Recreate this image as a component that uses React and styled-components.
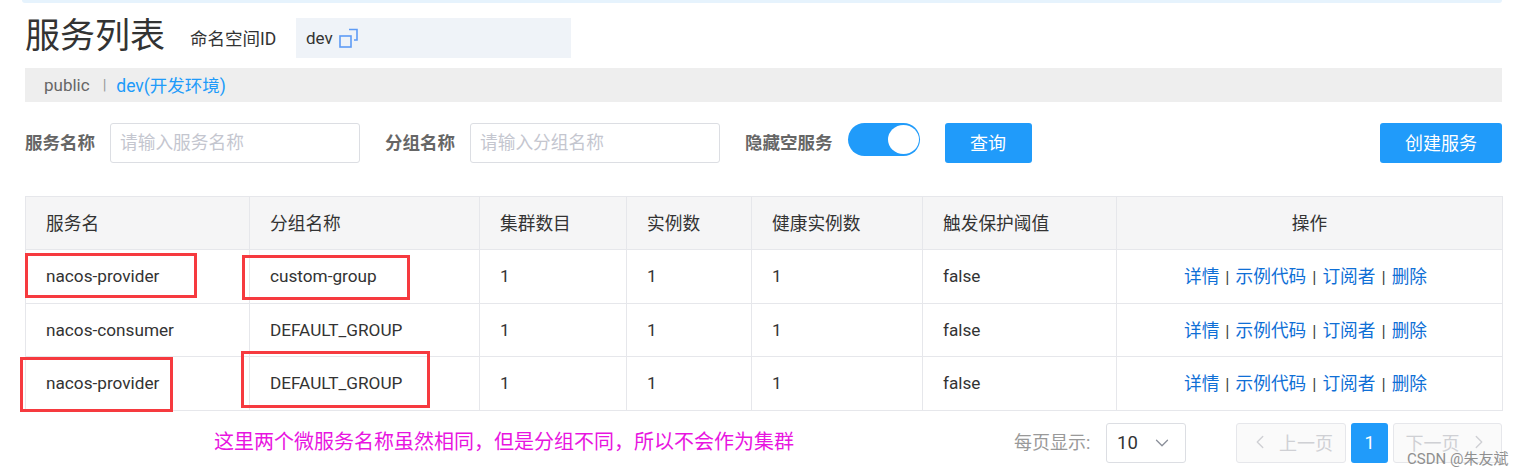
import React from "react";
import styled, { createGlobalStyle } from "styled-components";
import { ChevronDown, ChevronLeft, ChevronRight } from "lucide-react";

const services = [
  { name: "nacos-provider", group: "custom-group" },
  { name: "nacos-consumer", group: "DEFAULT_GROUP" },
  { name: "nacos-provider", group: "DEFAULT_GROUP" },
];

const columns = [
  { title: "服务名", width: 224 },
  { title: "分组名称", width: 230 },
  { title: "集群数目", width: 147 },
  { title: "实例数", width: 125 },
  { title: "健康实例数", width: 171 },
  { title: "触发保护阈值", width: 194 },
  { title: "操作", width: 386, center: true },
];

const marks = [
  { left: 0, top: 57, width: 172, height: 45 },
  { left: 217, top: 59, width: 168, height: 45 },
  { left: -5, top: 161, width: 153, height: 55 },
  { left: 216, top: 155, width: 189, height: 57 },
];

const GlobalStyle = createGlobalStyle`
  html, body {
    margin: 0;
    background: #fff;
    overflow: hidden;
  }
  body {
    font-family: Roboto, "Noto Sans CJK SC", sans-serif;
  }
`;

const App = () => {
  return (
    <Page>
      <GlobalStyle />
      <TopStrip />
      <TitleRow>
        <Title>服务列表</Title>
        <NamespaceLabel>命名空间ID</NamespaceLabel>
        <NamespaceBox>
          dev
          <CopyIcon viewBox="0 0 20 20">
            <rect x="1" y="8" width="11" height="11" fill="none" stroke="#5e9bf5" strokeWidth="1.6" />
            <path d="M10 1.500h8v10.500h-3" fill="none" stroke="#5e9bf5" strokeWidth="1.6" />
          </CopyIcon>
        </NamespaceBox>
      </TitleRow>

      <NamespaceBar>
        <PublicNamespace>public</PublicNamespace>
        <Divider>|</Divider>
        <ActiveNamespace>dev(开发环境)</ActiveNamespace>
      </NamespaceBar>

      <FilterRow>
        <FilterLabel>服务名称</FilterLabel>
        <Field placeholder="请输入服务名称" />
        <FilterLabel $left={25}>分组名称</FilterLabel>
        <Field placeholder="请输入分组名称" />
        <FilterLabel $left={25}>隐藏空服务</FilterLabel>
        <Switch>
          <Knob />
        </Switch>
        <Button $width={87}>查询</Button>
        <Button $width={122} $push>创建服务</Button>
      </FilterRow>

      <TableWrap>
        <Table>
          <colgroup>
            {columns.map((col) => (
              <col key={col.title} style={{ width: col.width }} />
            ))}
          </colgroup>
          <thead>
            <tr>
              {columns.map((col) => (
                <Th key={col.title} $center={col.center}>{col.title}</Th>
              ))}
            </tr>
          </thead>
          <tbody>
            {services.map((item, i) => (
              <tr key={i}>
                <Td>{item.name}</Td>
                <Td>{item.group}</Td>
                <Td>1</Td>
                <Td>1</Td>
                <Td>1</Td>
                <Td>false</Td>
                <ActionCell>
                  <Action>详情</Action>
                  <Sep>|</Sep>
                  <Action>示例代码</Action>
                  <Sep>|</Sep>
                  <Action>订阅者</Action>
                  <Sep>|</Sep>
                  <Action>删除</Action>
                </ActionCell>
              </tr>
            ))}
          </tbody>
        </Table>
        {marks.map((m, i) => (
          <Mark key={i} style={{ left: m.left, top: m.top, width: m.width, height: m.height }} />
        ))}
      </TableWrap>

      <Footer>
        <Note>这里两个微服务名称虽然相同，但是分组不同，所以不会作为集群</Note>
        <PageSizeLabel>每页显示:</PageSizeLabel>
        <PageSize>
          10
          <ChevronDown size={22} color="#8a8f99" strokeWidth={1.4} />
        </PageSize>
        <PageButton $width={110} $left={50}>
          <ChevronLeft size={22} strokeWidth={1.5} />
          上一页
        </PageButton>
        <CurrentPage>1</CurrentPage>
        <PageButton $width={109} $left={5}>
          下一页
          <ChevronRight size={22} strokeWidth={1.5} />
        </PageButton>
      </Footer>
      <Watermark>CSDN @朱友斌</Watermark>
    </Page>
  );
};

const Page = styled.div`
  position: relative;
  width: 1522px;
  height: 476px;
  box-sizing: border-box;
  padding: 0 20px 0 25px;
  overflow: hidden;
`;

const TopStrip = styled.div`
  height: 3px;
  margin-left: -3px;
  background: #e6f3fd;
  border-radius: 0 0 3px 3px;
`;

const TitleRow = styled.div`
  display: flex;
  align-items: center;
  height: 40px;
  margin-top: 15px;
`;

const Title = styled.h1`
  margin: 0;
  padding-bottom: 3px;
  font-size: 35px;
  font-weight: 400;
  line-height: 1;
  color: #333;
  white-space: nowrap;
`;

const NamespaceLabel = styled.span`
  margin-left: 25px;
  width: 106px;
  padding-bottom: 2px;
  font-size: 17.5px;
  color: #333;
  white-space: nowrap;
`;

const NamespaceBox = styled.div`
  display: flex;
  align-items: center;
  gap: 6px;
  width: 265px;
  height: 40px;
  padding-left: 10px;
  background: #eff3f8;
  font-size: 17px;
  color: #333;
`;

const CopyIcon = styled.svg`
  width: 20px;
  height: 20px;
`;

const NamespaceBar = styled.div`
  display: flex;
  align-items: center;
  height: 34px;
  margin-top: 10px;
  padding-left: 19px;
  background: #eee;
  font-size: 17px;
  color: #666;
`;

const PublicNamespace = styled.span`
  padding-bottom: 1px;
`;

const Divider = styled.span`
  margin: 0 10px 0 13px;
  font-size: 15px;
  color: #999;
`;

const ActiveNamespace = styled.span`
  padding-bottom: 2px;
  font-size: 17.5px;
  color: #209bfa;
`;

const FilterRow = styled.div`
  display: flex;
  align-items: flex-start;
  height: 40px;
  margin-top: 21px;
`;

const FilterLabel = styled.label`
  margin-left: ${(p) => p.$left || 0}px;
  width: ${(p) => (p.$left ? "auto" : "85px")};
  padding-right: ${(p) => (p.$left ? "15px" : 0)};
  font-size: 17.5px;
  font-weight: 700;
  line-height: 40px;
  color: #666;
  white-space: nowrap;
`;

const Field = styled.input`
  width: 250px;
  height: 40px;
  box-sizing: border-box;
  padding: 0 9px;
  border: 1px solid #dcdee3;
  border-radius: 3px;
  outline: none;
  font-family: inherit;
  font-size: 17.7px;
  &::placeholder {
    color: #c4c6cf;
  }
`;

const Switch = styled.div`
  position: relative;
  width: 72px;
  height: 33px;
  border-radius: 17px;
  background: #209bfa;
`;

const Knob = styled.span`
  position: absolute;
  top: 2px;
  right: 1px;
  width: 31px;
  height: 29px;
  border-radius: 50%;
  background: #fff;
`;

const Button = styled.button`
  width: ${(p) => p.$width}px;
  height: 40px;
  margin-left: ${(p) => (p.$push ? "auto" : "25px")};
  padding: 0 0 3px;
  border: none;
  border-radius: 3px;
  background: #209bfa;
  color: #fff;
  font-family: inherit;
  font-size: 18px;
`;

const TableWrap = styled.div`
  position: relative;
  margin-top: 33px;
`;

const Table = styled.table`
  width: 1477px;
  table-layout: fixed;
  border-collapse: collapse;
  font-size: 17.2px;
  color: #333;
`;

const Th = styled.th`
  height: 53px;
  box-sizing: border-box;
  padding: 0 20px 3px;
  border: 1px solid #e6e7eb;
  background: #f5f5f6;
  font-size: 17.7px;
  font-weight: 400;
  text-align: ${(p) => (p.$center ? "center" : "left")};
`;

const Td = styled.td`
  height: 53.5px;
  box-sizing: border-box;
  padding: 0 20px;
  border: 1px solid #e6e7eb;
  text-align: left;
  white-space: nowrap;
`;

const ActionCell = styled(Td)`
  padding: 0 28px 2px 20px;
  text-align: center;
`;

const Action = styled.a`
  font-size: 17.7px;
  color: #0f6fd6;
`;

const Sep = styled.span`
  margin: 0 6px;
  font-size: 17px;
  color: #444;
`;

const Mark = styled.div`
  position: absolute;
  box-sizing: border-box;
  border: 3px solid #f63a3f;
`;

const Footer = styled.div`
  display: flex;
  align-items: center;
  height: 40px;
  margin-top: 12px;
`;

const Note = styled.span`
  margin-left: 189px;
  width: 800px;
  padding-bottom: 4px;
  font-size: 20px;
  color: #e815e0;
  white-space: nowrap;
`;

const PageSizeLabel = styled.span`
  width: 92px;
  padding-bottom: 3px;
  font-size: 18px;
  color: #999;
`;

const PageSize = styled.div`
  display: flex;
  align-items: center;
  justify-content: space-between;
  width: 80px;
  height: 40px;
  box-sizing: border-box;
  padding: 0 12px 0 10px;
  border: 1px solid #dcdee3;
  border-radius: 3px;
  font-size: 18.5px;
  color: #333;
`;

const PageButton = styled.div`
  display: flex;
  align-items: center;
  justify-content: center;
  gap: 8px;
  width: ${(p) => p.$width}px;
  height: 40px;
  box-sizing: border-box;
  margin-left: ${(p) => p.$left}px;
  padding-bottom: 2px;
  border: 1px solid #e6e7eb;
  border-radius: 3px;
  background: #fafafa;
  color: #cfd0d4;
  font-size: 18px;
`;

const CurrentPage = styled.div`
  display: flex;
  align-items: center;
  justify-content: center;
  width: 37px;
  height: 40px;
  margin-left: 5px;
  border-radius: 3px;
  background: #209bfa;
  color: #fff;
  font-size: 18px;
`;

const Watermark = styled.span`
  position: absolute;
  left: 1407px;
  top: 447px;
  font-size: 15px;
  color: #8f8f8f;
  white-space: nowrap;
`;

export default App;
